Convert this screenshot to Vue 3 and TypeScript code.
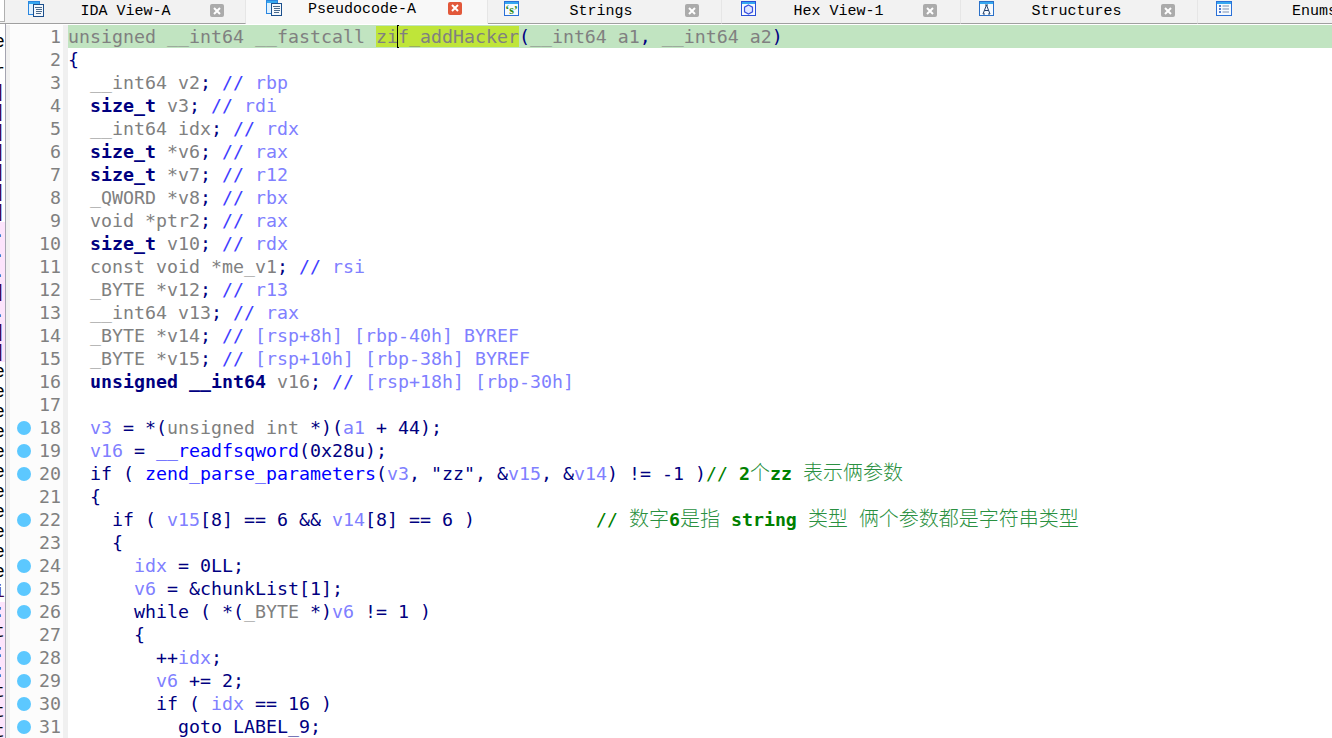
<script setup lang="ts">
type Tok = { cls: string; text: string }
type Row = { no: number; dot: boolean; toks: Tok[] }
type Tab = { name: string; icon: string; active?: boolean }

const tabs: Tab[] = [
  { name: 'IDA View-A', icon: 'doc' },
  { name: 'Pseudocode-A', icon: 'doc', active: true },
  { name: 'Strings', icon: 'str' },
  { name: 'Hex View-1', icon: 'hex' },
  { name: 'Structures', icon: 'struct' },
  { name: 'Enums', icon: 'enum' },
]

const source: string[] = [
  '{g:unsigned __int64 __fastcall }{h:zi}{c:}{h:f_addHacker}({g:__int64 a1}, {g:__int64 a2})',
  '{',
  '  {g:__int64 v2}; {b://} {v:rbp}',
  '  {n:size_t} {g:v3}; {b://} {v:rdi}',
  '  {g:__int64 idx}; {b://} {v:rdx}',
  '  {n:size_t} {g:*v6}; {b://} {v:rax}',
  '  {n:size_t} {g:*v7}; {b://} {v:r12}',
  '  {g:_QWORD *v8}; {b://} {v:rbx}',
  '  {g:void *ptr2}; {b://} {v:rax}',
  '  {n:size_t} {g:v10}; {b://} {v:rdx}',
  '  {g:const void *me_v1}; {b://} {v:rsi}',
  '  {g:_BYTE *v12}; {b://} {v:r13}',
  '  {g:__int64 v13}; {b://} {v:rax}',
  '  {g:_BYTE *v14}; {b://} {v:[rsp+8h] [rbp-40h] BYREF}',
  '  {g:_BYTE *v15}; {b://} {v:[rsp+10h] [rbp-38h] BYREF}',
  '  {n:unsigned __int64} {g:v16}; {b://} {v:[rsp+18h] [rbp-30h]}',
  '',
  '  {v:v3} = *({g:unsigned int} *)({v:a1} + 44);',
  '  {v:v16} = {f:__readfsqword}(0x28u);',
  '  if ( {f:zend_parse_parameters}({v:v3}, "zz", &{v:v15}, &{v:v14}) != -1 ){e:// 2个zz 表示俩参数}',
  '  {',
  '    if ( {v:v15}[8] == 6 && {v:v14}[8] == 6 )           {e:// 数字6是指 string 类型 俩个参数都是字符串类型}',
  '    {',
  '      {v:idx} = 0LL;',
  '      {v:v6} = &chunkList[1];',
  '      while ( *({g:_BYTE} *){v:v6} != 1 )',
  '      {',
  '        ++{v:idx};',
  '        {v:v6} += 2;',
  '        if ( {v:idx} == 16 )',
  '          goto LABEL_9;',
]

const dotted = new Set<number>([18, 19, 20, 22, 24, 25, 26, 28, 29, 30, 31])

function commentClass(part: string): string {
  if (/[\u4e00-\u9fff]/.test(part)) return 'e cjk'
  if (/[0-9a-z]/.test(part)) return 'e word'
  return 'e'
}

function parse(line: string): Tok[] {
  const out: Tok[] = []
  const re = /\{(\w):([^}]*)\}/g
  let last = 0
  let m: RegExpExecArray | null
  while ((m = re.exec(line))) {
    if (m.index > last) out.push({ cls: 'p', text: line.slice(last, m.index) })
    if (m[1] === 'e') {
      for (const part of m[2].split(/([\u4e00-\u9fff]+|[0-9a-z]+)/)) {
        if (part) out.push({ cls: commentClass(part), text: part })
      }
    } else {
      out.push({ cls: m[1], text: m[2] })
    }
    last = re.lastIndex
  }
  if (last < line.length) out.push({ cls: 'p', text: line.slice(last) })
  return out
}

const rows: Row[] = source.map((l, i) => ({ no: i + 1, dot: dotted.has(i + 1), toks: parse(l) }))

type Side = { ch: string; pink?: boolean; gap?: boolean; dark?: boolean }
const side: Side[] = [
  { ch: 'e' },
  { ch: '', gap: true },
  { ch: 'r' },
  ...Array.from({ length: 7 }, () => ({ ch: ']', dark: true })),
  { ch: '.', pink: true },
  { ch: '.', pink: true },
  { ch: '.', pink: true },
  { ch: ']', pink: true, dark: true },
  { ch: '.', pink: true },
  { ch: ']', pink: true, dark: true },
  { ch: ']', pink: true, dark: true },
  ...Array.from({ length: 11 }, () => ({ ch: 'e' })),
  { ch: 'i', dark: true },
  { ch: ':', pink: true },
  { ch: 't', pink: true },
  { ch: ':', pink: true },
  { ch: ':', pink: true },
  { ch: 't', pink: true },
  { ch: 't', pink: true },
  { ch: 't', pink: true },
]
</script>

<template>
  <div class="app">
    <div class="tabbar">
      <div class="corner"><div class="corner-box"></div></div>
      <div v-for="t in tabs" :key="t.name" class="tab" :class="{ active: t.active }">
        <svg class="ico" width="16" height="16" viewBox="0 0 16 16">
          <template v-if="t.icon === 'doc'">
            <rect x="0.5" y="0.5" width="11" height="13" fill="#dff1ff" stroke="#2a86e0" />
            <rect x="1" y="1" width="10" height="2" fill="#35a8f0" />
            <rect x="5.5" y="3.5" width="10" height="12" fill="#f4f8fc" stroke="#1c4f8c" />
            <path d="M7 6.5h7M8 8.5h6M8 10.5h6M8 12.5h5" stroke="#4a6a8c" stroke-width="1" />
          </template>
          <template v-else-if="t.icon === 'str'">
            <rect x="0.5" y="0.5" width="14" height="14" fill="#f6fafe" stroke="#2a70d8" />
            <rect x="1" y="1" width="13" height="2" fill="#35a8f0" />
            <text x="7.5" y="13" text-anchor="middle" class="ico-s">‘s’</text>
          </template>
          <template v-else-if="t.icon === 'hex'">
            <rect x="0.5" y="0.5" width="14" height="14" fill="#f6fafe" stroke="#2a50d8" />
            <rect x="1" y="1" width="13" height="2" fill="#35a8f0" />
            <path d="M7.5 4l4 2.2v4.6l-4 2.2-4-2.2V6.200z" fill="#dfe6ff" stroke="#3a50e0" stroke-width="1.200" />
          </template>
          <template v-else-if="t.icon === 'struct'">
            <rect x="0.5" y="0.5" width="14" height="14" fill="#f6fafe" stroke="#2a70c8" />
            <rect x="1" y="1" width="13" height="2" fill="#35a8f0" />
            <path d="M7.500 4L4 13M7.500 4L11 13M5.500 9.500h4M4 13h2M9 13h2M6 4h3" stroke="#23406a" fill="none" />
          </template>
          <template v-else>
            <rect x="0.5" y="0.5" width="15" height="14" fill="#f6fafe" stroke="#2a70d8" />
            <rect x="1" y="1" width="14" height="2" fill="#35a8f0" />
            <path d="M3 5h2M3 8h2M3 11h2" stroke="#1a50c0" stroke-width="1.500" />
            <path d="M6.500 5H13M6.500 8H13M6.500 11H13" stroke="#7a8fb0" />
          </template>
        </svg>
        <span class="tab-name">{{ t.name }}</span>
        <span class="close">
          <svg width="8" height="8" viewBox="0 0 8 8"><path d="M1 1l6 6M7 1L1 7" stroke="#fff" stroke-width="2" /></svg>
        </span>
      </div>
    </div>

    <div class="main">
      <div class="strip">
        <div
          v-for="(s, i) in side"
          :key="i"
          class="strip-row"
          :class="{ pink: s.pink, gap: s.gap, dark: s.dark }"
        >{{ s.ch }}</div>
      </div>
      <div class="editor">
        <div v-for="r in rows" :key="r.no" class="row">
          <div class="gutter">
            <span v-if="r.dot" class="dot"></span>
            <span class="no">{{ r.no }}</span>
          </div>
          <div class="band"></div>
          <div class="code" :class="{ current: r.no === 1 }">
            <span v-for="(t, i) in r.toks" :key="i" :class="t.cls">{{ t.text }}</span>
          </div>
        </div>
      </div>
    </div>
  </div>
</template>

<style>
html,
body {
  margin: 0;
  background: #fff;
  overflow: hidden;
}
</style>

<style scoped>
.app {
  width: 1332px;
  height: 738px;
  overflow: hidden;
  display: flex;
  flex-direction: column;
  background: #fff;
}

.tabbar {
  height: 24px;
  flex: none;
  display: flex;
  background: #f2f2f2;
  overflow: hidden;
}
.corner {
  width: 10px;
  flex: none;
  box-sizing: border-box;
  border-bottom: 1px solid #a0a0a0;
}
.corner-box {
  width: 4px;
  height: 21px;
  background: #fff;
  border-right: 1px solid #b0b0b0;
  border-bottom: 1px solid #b0b0b0;
}
.tab {
  flex: none;
  width: 238px;
  box-sizing: border-box;
  height: 24px;
  padding: 0 21px 0 18px;
  display: flex;
  align-items: center;
  border-bottom: 1px solid #a0a0a0;
  border-right: 1px solid #e6e6e6;
  font-family: "Liberation Mono", monospace;
  font-size: 15px;
  color: #000;
}
.tab:nth-child(2) {
  width: 236px;
}
.tab:nth-child(4) {
  width: 234px;
  padding-left: 16px;
  padding-right: 22px;
}
.tab:nth-child(5) {
  width: 239px;
  padding-left: 19px;
  padding-right: 23px;
}
.tab:nth-child(6) {
  width: 237px;
  padding-right: 22px;
}
.tab.active {
  width: 242px;
  padding: 0 25px 5px 20px;
  background: #f8f8f8;
  border-bottom-color: #f8f8f8;
}
.ico {
  flex: none;
  margin-top: -5px;
}
.active .ico {
  margin-top: -2px;
}
.ico-s {
  font-family: "Liberation Serif", serif;
  font-size: 12px;
  font-weight: 700;
  fill: #2f8a18;
}
.tab-name {
  flex: 1;
  text-align: center;
  white-space: pre;
  padding-right: 3px;
}
.active .tab-name {
  padding-right: 6px;
}
.close {
  flex: none;
  width: 14px;
  height: 13px;
  border-radius: 2px;
  background: #ababab;
  display: flex;
  align-items: center;
  justify-content: center;
  margin-top: -2px;
}
.active .close {
  background: #e2583a;
  margin-top: -2px;
}

.main {
  flex: 1;
  display: flex;
  min-height: 0;
}
.strip {
  width: 6px;
  flex: none;
  box-sizing: border-box;
  padding-top: 8px;
  border-right: 1px solid #a4a4b0;
  overflow: hidden;
  font-family: "Liberation Mono", monospace;
  font-size: 18px;
  color: #000;
}
.strip-row {
  height: 20px;
  line-height: 20px;
  text-indent: -6px;
}
.strip-row.gap {
  height: 10px;
}
.strip-row.pink {
  background: #fce4fc;
}
.strip-row.dark {
  color: #400050;
}

.editor {
  flex: 1;
  min-width: 0;
  padding-top: 1px;
  font-family: "DejaVu Sans Mono", "Noto Sans CJK SC", monospace;
  font-size: 18.27px;
  color: #000080;
}
.row {
  display: flex;
  height: 23px;
  line-height: 23px;
}
.gutter {
  width: 57px;
  flex: none;
  box-sizing: border-box;
  border-left: 4px solid #f0f0f0;
  padding: 0 2px 0 7px;
  background: #fcfcfc;
  display: flex;
  align-items: center;
  color: #808080;
}
.dot {
  width: 14px;
  height: 14px;
  border-radius: 50%;
  background: #5cc8ff;
}
.no {
  margin-left: auto;
}
.band {
  width: 5px;
  flex: none;
  background: #f0f0f0;
}
.code {
  flex: 1;
  min-width: 0;
  white-space: pre;
  overflow: hidden;
}
.code.current {
  background: #c1e4c1;
}
.g {
  color: #808080;
}
.v {
  color: #8080ff;
}
.b {
  color: #4040ff;
}
.f {
  color: #0000ff;
}
.n {
  font-weight: 700;
}
.e {
  color: #008000;
}
.word {
  font-weight: 700;
}
.cjk {
  font-family: "Noto Sans CJK SC", sans-serif;
  font-size: 20px;
  line-height: 20px;
  font-weight: 300;
  color: #2a9040;
}
.h {
  color: #808080;
  background: #bfe539;
}
.c {
  display: inline-block;
  width: 2px;
  height: 23px;
  margin: 0 -1px;
  background: #000;
  vertical-align: top;
}
</style>
